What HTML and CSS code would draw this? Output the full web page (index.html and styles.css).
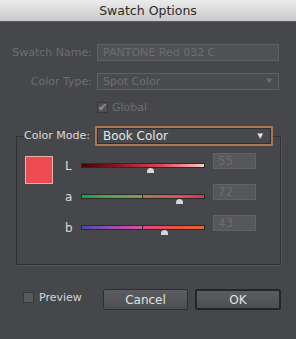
FILE: index.html
```html
<!DOCTYPE html>
<html lang="en">
<head>
  <meta charset="UTF-8">
  <meta name="viewport" content="width=device-width, initial-scale=1.0">
  <title>Swatch Options</title>
  <link rel="stylesheet" href="styles.css">
</head>
<body>

  <div class="dialog">
    <div class="titlebar">Swatch Options</div>

    <div class="content">
      <!-- Campos desabilitados -->
      <div class="form-grid">
        <label class="label disabled">Swatch Name:</label>
        <div class="field disabled">PANTONE Red 032 C</div>

        <label class="label disabled">Color Type:</label>
        <div class="field select disabled">Spot Color<span class="arrow">&#9660;</span></div>

        <span></span>
        <div class="check-row disabled">
          <span class="checkbox checked">&#10004;</span>
          <span>Global</span>
        </div>
      </div>

      <!-- Grupo Color Mode -->
      <div class="group">
        <div class="group-header">
          <span class="group-label">Color Mode:</span>
          <div class="mode-select">Book Color<span class="arrow">&#9660;</span></div>
        </div>

        <div class="group-body">
          <div class="swatch"></div>
          <div class="sliders">
            <div class="slider-row">
              <span class="channel">L</span>
              <div class="track">
                <div class="bar bar-l"></div>
                <span class="thumb" style="left: 56%"></span>
              </div>
              <div class="value">55</div>
            </div>
            <div class="slider-row">
              <span class="channel">a</span>
              <div class="track">
                <div class="bar bar-a"></div>
                <span class="thumb" style="left: 79%"></span>
              </div>
              <div class="value">72</div>
            </div>
            <div class="slider-row">
              <span class="channel">b</span>
              <div class="track">
                <div class="bar bar-b"></div>
                <span class="thumb" style="left: 67%"></span>
              </div>
              <div class="value">43</div>
            </div>
          </div>
        </div>
      </div>

      <!-- Rodapé -->
      <div class="footer">
        <div class="check-row preview">
          <span class="checkbox"></span>
          <span>Preview</span>
        </div>
        <button class="btn">Cancel</button>
        <button class="btn default">OK</button>
      </div>
    </div>
  </div>

</body>
</html>
```

FILE: styles.css
```css
* {
  margin: 0;
  padding: 0;
  box-sizing: border-box;
}

body {
  font-family: "DejaVu Sans", "Liberation Sans", sans-serif;
  font-size: 11px;
  background-color: #46474a;
  width: 296px;
  height: 339px;
  overflow: hidden;
}

.dialog {
  width: 296px;
  height: 339px;
  background-color: #46474a;
}

.titlebar {
  height: 22px;
  background: linear-gradient(#ececec, #c8c8c8);
  border-bottom: 1px solid #5a5b5d;
  color: #2b2b2b;
  font-size: 12.5px;
  text-align: center;
  line-height: 22px;
}

.content {
  padding: 22px 0 0 0;
}

.form-grid {
  display: grid;
  grid-template-columns: 92px 182px;
  column-gap: 5px;
  row-gap: 12px;
  align-items: center;
}

.label {
  text-align: right;
}

.disabled {
  color: #6c6e71;
}

.field {
  height: 17px;
  line-height: 15px;
  padding-left: 5px;
  background-color: #505154;
  border: 1px solid #5f6063;
  position: relative;
}

.select {
  background-color: #4a4b4e;
}

.arrow {
  position: absolute;
  right: 6px;
  top: 0;
  font-size: 7px;
}

.check-row {
  display: flex;
  align-items: center;
  gap: 4px;
  height: 12px;
  margin-top: -1px;
}

.checkbox {
  width: 11px;
  height: 11px;
  background-color: #5a5b5e;
  border: 1px solid #38393b;
  font-size: 11px;
  line-height: 9px;
  color: #8a8c8f;
  text-align: center;
}

.checkbox.checked {
  background-color: #505154;
  color: #8e9093;
}

.group {
  margin: 23px 15px 0 16px;
  height: 129px;
  border: 1px solid #2f3032;
  box-shadow: 1px 1px 0 #56575a;
}

.group-header {
  display: flex;
  align-items: center;
  margin-top: -11px;
  padding-left: 7px;
  height: 20px;
}

.group-label {
  color: #dcdcdc;
  background-color: #46474a;
  padding-right: 5px;
  line-height: 20px;
}

.mode-select {
  position: relative;
  width: 178px;
  height: 20px;
  line-height: 16px;
  padding-left: 6px;
  color: #e6e6e6;
  font-size: 12px;
  background-color: #48494c;
  border: 2px solid #a87452;
  box-shadow: inset 0 0 0 1px #2e2f31;
}

.mode-select .arrow {
  color: #e6e6e6;
  right: 8px;
  top: 0;
}

.group-body {
  display: flex;
  padding: 10px 0 0 8px;
}

.swatch {
  width: 28px;
  height: 28px;
  background-color: #ee4a51;
  border: 1px solid #e6b1a9;
}

.sliders {
  display: flex;
  flex-direction: column;
  gap: 15px;
  padding-top: 2px;
}

.slider-row {
  display: flex;
  align-items: flex-start;
  height: 16px;
}

.channel {
  width: 16px;
  margin-left: 12px;
  color: #dcdcdc;
  font-size: 12px;
  line-height: 16px;
}

.track {
  position: relative;
  width: 124px;
  height: 16px;
  padding-top: 5px;
}

.bar {
  height: 5px;
  border: 1px solid #2a2a2c;
}

.bar-l {
  background: linear-gradient(to right, #3d0709, #8d1826 30%, #e04556 65%, #f9c6c3);
}

.bar-a {
  background: linear-gradient(to right, #11a352, #5aa24e 25%, #8b9a4a 49%, #2a2a2c 49%, #2a2a2c 50%, #a37d4c 50%, #d8505a 80%, #e5295c);
}

.bar-b {
  background: linear-gradient(to right, #5047a8, #9651ac 25%, #db4fa4 49%, #2a2a2c 49%, #2a2a2c 50%, #e64581 50%, #e95542 80%, #e8602e);
}

.thumb {
  position: absolute;
  top: 10px;
  width: 7px;
  height: 5px;
  margin-left: -3px;
  background-color: #d6d6d6;
  border-radius: 4px 4px 0 0;
}

.value {
  width: 43px;
  height: 16px;
  margin-left: 8px;
  margin-top: -5px;
  padding-left: 4px;
  line-height: 14px;
  font-size: 12px;
  color: #6a6c6f;
  background-color: #56575a;
  border: 1px solid #626366;
}

.footer {
  display: flex;
  align-items: center;
  padding: 24px 0 0 23px;
}

.preview {
  color: #d6d6d6;
  gap: 5px;
  width: 80px;
  font-size: 11px;
  margin-top: -4px;
}

.preview .checkbox {
  background-color: #58595c;
}

.btn {
  width: 85px;
  height: 21px;
  font-family: "DejaVu Sans", "Liberation Sans", sans-serif;
  font-size: 12px;
  color: #e2e2e2;
  background: linear-gradient(#5c5d60, #4d4e51);
  border: 1px solid #2e2f31;
  border-radius: 2px;
}

.btn.default {
  width: 86px;
  margin-left: 7px;
  border: 2px solid #242527;
}
```
